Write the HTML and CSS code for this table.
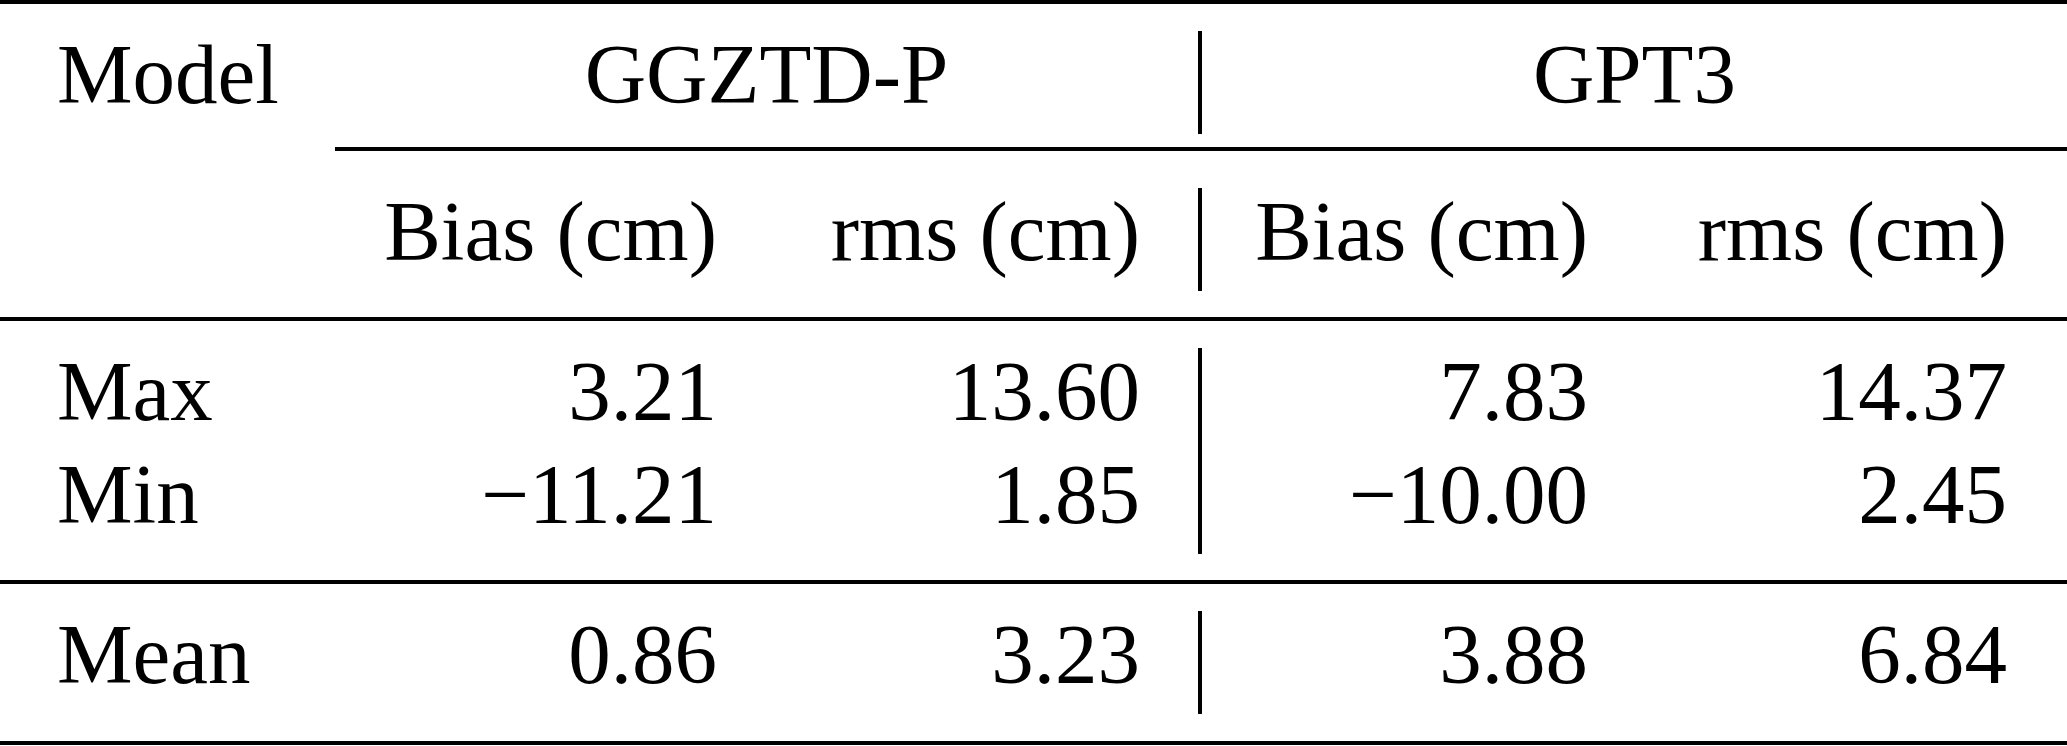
FILE: index.html
```html
<!DOCTYPE html>
<html lang="en">
  <head>
    <meta charset="UTF-8" />
    <meta name="viewport" content="width=device-width, initial-scale=1.0" />
    <title>GGZTD-P vs GPT3</title>
    <link rel="stylesheet" href="styles.css">
  </head>
  <body>
    <div class="table">
      <div class="rule top"></div>

      <div class="row">
        <div class="cell label">Model</div>
        <div class="cell group">GGZTD-P</div>
        <div class="sep"></div>
        <div class="cell group">GPT3</div>
      </div>

      <div class="rule cmid"></div>

      <div class="row">
        <div class="cell label"></div>
        <div class="cell num">Bias (cm)</div>
        <div class="cell num">rms (cm)</div>
        <div class="sep"></div>
        <div class="cell num">Bias (cm)</div>
        <div class="cell num last">rms (cm)</div>
      </div>

      <div class="rule mid"></div>

      <div class="row">
        <div class="cell label">Max</div>
        <div class="cell num">3.21</div>
        <div class="cell num">13.60</div>
        <div class="sep"></div>
        <div class="cell num">7.83</div>
        <div class="cell num last">14.37</div>
      </div>
      <div class="row">
        <div class="cell label">Min</div>
        <div class="cell num">&minus;11.21</div>
        <div class="cell num">1.85</div>
        <div class="sep"></div>
        <div class="cell num">&minus;10.00</div>
        <div class="cell num last">2.45</div>
      </div>

      <div class="rule mid"></div>

      <div class="row">
        <div class="cell label">Mean</div>
        <div class="cell num">0.86</div>
        <div class="cell num">3.23</div>
        <div class="sep"></div>
        <div class="cell num">3.88</div>
        <div class="cell num last">6.84</div>
      </div>

      <div class="rule bottom"></div>
    </div>
  </body>
</html>
```

FILE: styles.css
```css
body {
  margin: 0;
  background: #fff;
  color: #000;
  font-family: "Liberation Serif", "Times New Roman", serif;
}

.table {
  width: 2067px;
  font-size: 85px;
}

/* booktabs style rules */
.rule {
  height: 4px;
  background-color: #000;
}

.rule.top {
  margin-bottom: 27px;
}

.rule.cmid {
  margin: 13px 0 37px 335px;
}

.rule.mid {
  margin: 26px 0 27px;
}

.rule.bottom {
  margin-top: 27px;
}

.row {
  display: grid;
  grid-template-columns: 335px 440px 423px 4px 444px 421px;
  height: 103px;
}

.cell {
  line-height: 87px;
  white-space: nowrap;
}

.label {
  padding-left: 57px;
}

.group {
  grid-column: span 2;
  text-align: center;
}

.num {
  text-align: right;
  padding-right: 58px;
}

.num.last {
  padding-right: 60px;
}

/* vertical bar between the two models */
.sep {
  background-color: #000;
}
```
